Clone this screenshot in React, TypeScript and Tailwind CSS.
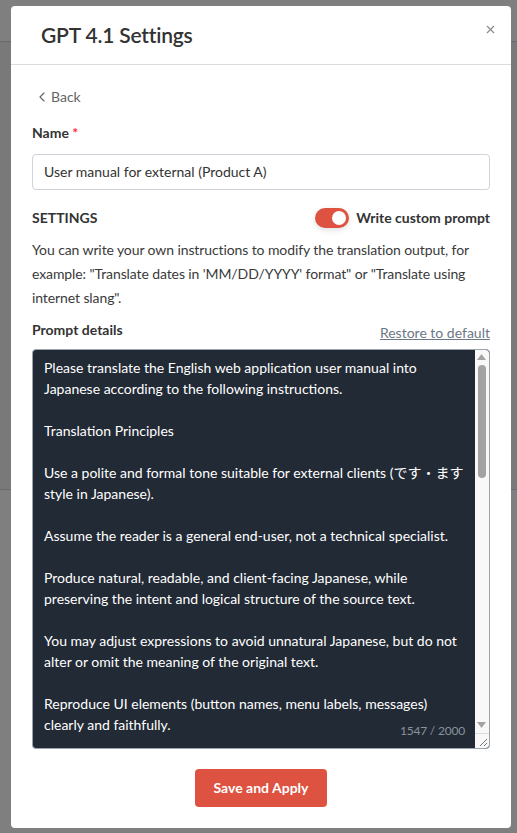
import { ChevronLeft, X } from 'lucide-react';

const PROMPT_LINES = [
  'Please translate the English web application user manual into',
  'Japanese according to the following instructions.',
  '',
  'Translation Principles',
  '',
  'Use a polite and formal tone suitable for external clients (です・ます',
  'style in Japanese).',
  '',
  'Assume the reader is a general end-user, not a technical specialist.',
  '',
  'Produce natural, readable, and client-facing Japanese, while',
  'preserving the intent and logical structure of the source text.',
  '',
  'You may adjust expressions to avoid unnatural Japanese, but do not',
  'alter or omit the meaning of the original text.',
  '',
  'Reproduce UI elements (button names, menu labels, messages)',
  'clearly and faithfully.',
];

function Scrollbar() {
  return (
    <div className="w-[15px] bg-[#f8f8f8] flex flex-col rounded-r-[3px]">
      <div className="h-[15px] flex items-center justify-center">
        <svg width="9" height="6" viewBox="0 0 9 6"><path d="M4.5 0L9 6H0z" fill="#a3a3a3" /></svg>
      </div>
      <div className="flex-1 px-[3px]">
        <div className="h-[113px] rounded-full bg-[#a3a3a3]" />
      </div>
      <div className="h-[15px] flex items-center justify-center">
        <svg width="9" height="6" viewBox="0 0 9 6"><path d="M0 0H9L4.5 6z" fill="#a3a3a3" /></svg>
      </div>
      <div className="h-[15px] border-t border-[#dcdcdc] flex items-end justify-end pr-[2px] pb-[2px]">
        <svg width="8" height="8" viewBox="0 0 8 8">
          <path d="M8 1L1 8M8 5L5 8" stroke="#777" strokeWidth="1" />
        </svg>
      </div>
    </div>
  );
}

export default function App() {
  return (
    <div className="relative w-full h-[833px] overflow-hidden bg-white font-['Lato','Noto_Sans_CJK_JP',sans-serif]">
      {/* page behind the dialog */}
      <div className="h-[42px] border-b border-gray-300 bg-white" />
      <div className="h-[448px] border-b border-gray-300 bg-[#f3f3f3]" />

      {/* overlay */}
      <div className="absolute inset-0 bg-black/50 flex items-center pl-[11px]">
        <div className="w-[500px] h-[822px] bg-white rounded-[4px] flex flex-col">
          {/* Header */}
          <div className="relative h-[59px] border-b border-[#dcdcdc] flex items-center px-[30px]">
            <h1 className="text-[21px] font-semibold text-[#333] tracking-[-0.2px]">GPT 4.1 Settings</h1>
            <button className="absolute right-[14px] top-[17px] text-[#888]">
              <X className="w-[13px] h-[13px]" strokeWidth={2} />
            </button>
          </div>

          {/* Body */}
          <div className="flex flex-col px-[21px] pt-[22px] pb-[21px] text-[14px] text-[#333]">
            <button className="flex items-center gap-[1px] h-[20px] text-[#666] pl-[2px]">
              <ChevronLeft className="w-[16px] h-[16px]" strokeWidth={1.75} />
              <span>Back</span>
            </button>

            <label className="mt-[16px] leading-[20px] font-bold">
              Name <span className="text-red-500">*</span>
            </label>
            <input
              className="mt-[11px] h-[36px] rounded-[4px] border border-[#cfd4da] px-[11px] text-[14px] text-[#333] outline-none"
              defaultValue="User manual for external (Product A)"
            />

            <div className="mt-[18px] h-[20px] flex items-center justify-between">
              <span className="font-bold uppercase">Settings</span>
              <div className="flex items-center gap-[7px]">
                <div className="w-[34px] h-[20px] rounded-full bg-[#dd5241] flex items-center justify-end pr-[3px] shadow-[0_2px_6px_rgba(0,0,0,0.12)]">
                  <div className="w-[14px] h-[14px] rounded-full bg-white" />
                </div>
                <span className="font-bold">Write custom prompt</span>
              </div>
            </div>

            <p className="mt-[10px] leading-[24px] text-[#3a3a3a] tracking-[-0.1px]">
              You can write your own instructions to modify the translation output, for example: "Translate dates in 'MM/DD/YYYY' format" or "Translate using internet slang".
            </p>

            <div className="mt-[10px] h-[20px] flex items-end justify-between">
              <span className="font-bold leading-[20px]">Prompt details</span>
              <a className="text-[#6b7785] underline leading-[20px] translate-y-[3px]">Restore to default</a>
            </div>

            <div className="relative mt-[9px] h-[400px] rounded-[4px] border border-[#9ba4ae] bg-[#222a35] flex overflow-hidden">
              <div className="flex-1 px-[11px] py-[7px] text-white leading-[21px]">
                {PROMPT_LINES.map((line, i) => (
                  <div key={i} className="h-[21px] whitespace-nowrap">{line}</div>
                ))}
              </div>
              <Scrollbar />
              <span className="absolute right-[24px] bottom-[8px] text-[12px] text-[#8a929c] tracking-[-0.2px]">1547 / 2000</span>
            </div>

            <div className="mt-[20px] flex justify-center">
              <button className="h-[38px] w-[132px] rounded-[4px] bg-[#dd5241] text-white font-bold text-[14px]">
                Save and Apply
              </button>
            </div>
          </div>
        </div>
      </div>
    </div>
  );
}
